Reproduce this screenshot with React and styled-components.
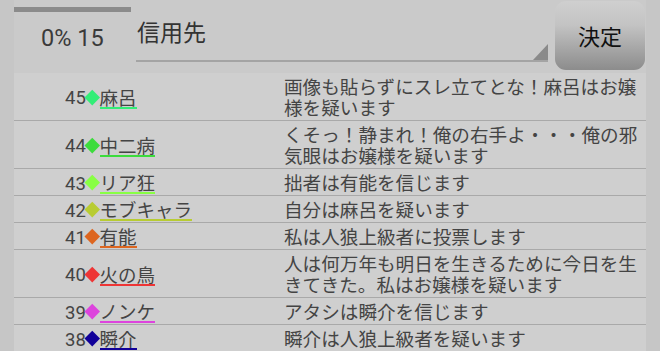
import React from "react";
import styled, { createGlobalStyle } from "styled-components";

const Global = createGlobalStyle`
  html, body { margin: 0; padding: 0; background: #c6c6c6; }
  body { font-family: "Noto Sans CJK JP", "Noto Sans", sans-serif; }
  * { box-sizing: border-box; }
`;

const Page = styled.div`
  width: 660px;
  height: 351px;
  overflow: hidden;
  background: #c6c6c6;
  padding: 0 14px;
`;

const Header = styled.div`
  display: grid;
  grid-template-columns: 122px 412px 1fr;
  height: 73px;
  background: #cacaca;
`;

const Counter = styled.div`
  display: flex;
  flex-direction: column;
`;

const Progress = styled.div`
  margin-top: 7px;
  width: 117px;
  height: 5px;
  background: #8b8b8b;
`;

const CounterText = styled.div`
  margin-top: 11px;
  padding-left: 27px;
  font-family: Roboto, "Noto Sans", sans-serif;
  font-size: 23.5px;
  line-height: 30px;
  color: #3a3a3a;
`;

const Spinner = styled.div`
  position: relative;
  height: 62px;
  border-bottom: 2px solid #a4a4a4;
  padding-left: 1px;
  padding-top: 15px;
  font-size: 23px;
  line-height: 32px;
  color: #333;
`;

const SpinnerArrow = styled.div`
  position: absolute;
  right: 0;
  bottom: 0;
  width: 0;
  height: 0;
  border-left: 15px solid transparent;
  border-bottom: 16px solid #8a8a8a;
`;

const Button = styled.div`
  margin: 1px 1px 0 7px;
  height: 69px;
  border-radius: 11px;
  background: linear-gradient(#cfcfcf, #c3c3c3 35%, #8c8c8c);
  display: flex;
  align-items: center;
  justify-content: center;
  font-size: 22px;
  color: #111;
  padding-bottom: 1px;
`;

const List = styled.div`
  background: #cfcfcf;
`;

const Row = styled.div`
  display: grid;
  grid-template-columns: 270px 1fr;
  border-bottom: 1px solid #a9a9a9;
  padding: 2px 0 3px;
  align-items: center;
`;

const Who = styled.div`
  display: flex;
  align-items: center;
  padding-left: 51px;
  height: 21px;
  color: #444;
`;

const Num = styled.span`
  font-family: Roboto, "Noto Sans", sans-serif;
  font-size: 18.5px;
  width: 21px;
  line-height: 21px;
  margin-top: 5px;
`;

const Diamond = styled.span`
  width: 10.5px;
  height: 10.5px;
  margin: 2px 2px 0 1px;
  transform: rotate(45deg);
  background: ${(p) => p.$c};
`;

const Name = styled.span`
  font-size: 18.5px;
  line-height: 18px;
  margin-top: 4px;
  padding-bottom: 1px;
  border-bottom: 2px solid ${(p) => p.$c};
`;

const Msg = styled.div`
  font-size: 18.6px;
  line-height: 21px;
  color: #444;
  padding-right: 4px;
`;

const rows = [
  { n: 45, c: "#33ee77", name: "麻呂", msg: "画像も貼らずにスレ立てとな！麻呂はお嬢様を疑います" },
  { n: 44, c: "#3cdc3c", name: "中二病", msg: "くそっ！静まれ！俺の右手よ・・・俺の邪気眼はお嬢様を疑います" },
  { n: 43, c: "#88ff44", name: "リア狂", msg: "拙者は有能を信じます" },
  { n: 42, c: "#b8cc33", name: "モブキャラ", msg: "自分は麻呂を疑います" },
  { n: 41, c: "#dd6620", name: "有能", msg: "私は人狼上級者に投票します" },
  { n: 40, c: "#ee3535", name: "火の鳥", msg: "人は何万年も明日を生きるために今日を生きてきた。私はお嬢様を疑います" },
  { n: 39, c: "#dd44dd", name: "ノンケ", msg: "アタシは瞬介を信じます" },
  { n: 38, c: "#110099", name: "瞬介", msg: "瞬介は人狼上級者を疑います" },
];

export default function App() {
  return (
    <>
      <Global />
      <Page>
        <Header>
          <Counter>
            <Progress />
            <CounterText>0% 15</CounterText>
          </Counter>
          <Spinner>
            信用先
            <SpinnerArrow />
          </Spinner>
          <Button>決定</Button>
        </Header>
        <List>
          {rows.map((r) => (
            <Row key={r.n}>
              <Who>
                <Num>{r.n}</Num>
                <Diamond $c={r.c} />
                <Name $c={r.c}>{r.name}</Name>
              </Who>
              <Msg>{r.msg}</Msg>
            </Row>
          ))}
        </List>
      </Page>
    </>
  );
}
